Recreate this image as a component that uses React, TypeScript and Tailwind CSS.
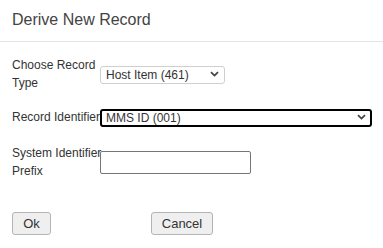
import React from "react";

const Chevron = () => (
  <svg
    width="9"
    height="6"
    viewBox="0 0 9 6"
    className="pointer-events-none absolute right-[6px] top-1/2 -translate-y-1/2"
  >
    <path d="M1 1.2 L4.5 4.6 L8 1.2" fill="none" stroke="#444" strokeWidth="1.8" />
  </svg>
);

const Label = ({ children }: { children: React.ReactNode }) => (
  <div className="w-[88px] shrink-0 whitespace-nowrap text-[12px] leading-[18px] text-[#333]">
    {children}
  </div>
);

export default function App() {
  return (
    <div
      className="h-[248px] w-[383px] bg-white text-[#333]"
      style={{ fontFamily: '"Liberation Sans", Arial, sans-serif' }}
    >
      <div className="flex h-[42px] items-center border-b border-[#e5e5e5] px-3 pb-[1px]">
        <h1 className="text-[16px] font-normal text-[#444]">Derive New Record</h1>
      </div>

      <div className="px-3 pt-[14px]">
        <div className="flex items-center">
          <Label>
            Choose Record
            <br />
            Type
          </Label>
          <div className="relative">
            <select className="h-[18px] w-[125px] appearance-none rounded-[3px] border border-[#cfcfcf] bg-white pl-[5px] text-[12px] leading-[16px] text-[#333] outline-none">
              <option>Host Item (461)</option>
            </select>
            <Chevron />
          </div>
        </div>

        <div className="mt-[13px] flex items-center">
          <Label>Record Identifier</Label>
          <div className="relative">
            <select className="h-[18px] w-[272px] appearance-none rounded-[3px] border-2 border-black bg-white pl-[4px] text-[12px] leading-[14px] text-[#333] outline-none">
              <option>MMS ID (001)</option>
            </select>
            <Chevron />
          </div>
        </div>

        <div className="mt-[15px] flex items-center">
          <Label>
            System Identifier
            <br />
            Prefix
          </Label>
          <input
            type="text"
            className="h-[23px] w-[151px] rounded-[2px] border border-[#767676] bg-white px-1 text-[12px] outline-none"
          />
        </div>

        <div className="mt-[32px] flex items-center">
          <button className="h-[23px] w-[39px] rounded-[3px] border border-[#b4b4b4] bg-[#efefef] text-[13px] text-[#333]">
            Ok
          </button>
          <button className="ml-[100px] h-[23px] w-[62px] rounded-[3px] border border-[#b4b4b4] bg-[#efefef] text-[13px] text-[#333]">
            Cancel
          </button>
        </div>
      </div>
    </div>
  );
}
